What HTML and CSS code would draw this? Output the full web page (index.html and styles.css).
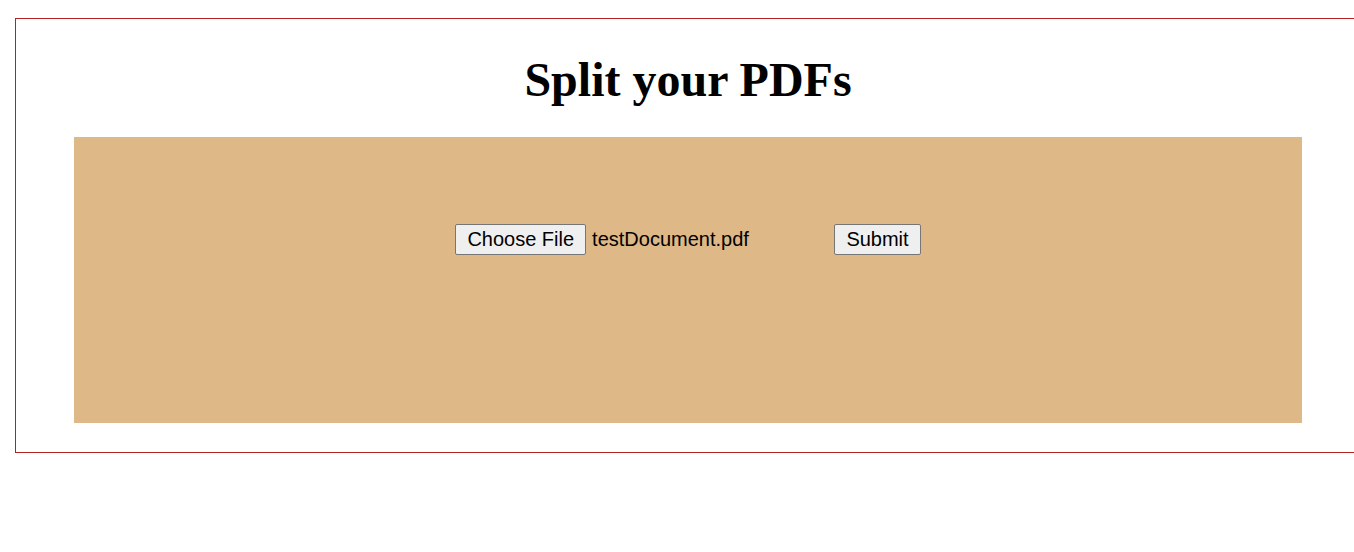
FILE: index.html
```html
<!DOCTYPE html>
<html>
<head>
<meta charset="utf-8">
<title>Split your PDFs</title>
<link rel="stylesheet" href="styles.css">
</head>
<body>
<div class="frame">
  <h1 class="title">Split your PDFs</h1>
  <div class="panel">
    <form class="upload">
      <div class="file-widget">
        <button type="button" class="btn">Choose File</button>
        <span class="file-name">testDocument.pdf</span>
      </div>
      <button type="button" class="btn">Submit</button>
    </form>
  </div>
</div>
</body>
</html>
```

FILE: styles.css
```css
html, body {
  margin: 0;
  padding: 0;
  overflow: hidden;
  background: #ffffff;
}

.frame {
  box-sizing: border-box;
  margin: 18px 0 0 15px;
  width: 1346px;
  border: 1px solid #b22222;
  padding: 0 58px 29px 58px;
}

.title {
  margin: 33px 0 30px 0;
  font-family: "Liberation Serif", "Times New Roman", serif;
  font-weight: bold;
  font-size: 48px;
  line-height: 55px;
  text-align: center;
  color: #000;
}

.panel {
  box-sizing: border-box;
  height: 286px;
  background: #deb887;
  padding-top: 87px;
}

.upload {
  display: flex;
  justify-content: center;
  align-items: center;
  gap: 4px;
  margin: 0;
}

.file-widget {
  display: flex;
  align-items: center;
  gap: 6px;
  width: 375px;
}

.btn {
  box-sizing: border-box;
  height: 31px;
  font-family: "Liberation Sans", Arial, sans-serif;
  font-size: 20px;
  line-height: 23px;
  color: #000;
  background: #efefef;
  border: 1px solid #767676;
  border-radius: 2px;
  padding: 3px 11px;
  margin: 0;
}

.file-name {
  font-family: "Liberation Sans", Arial, sans-serif;
  font-size: 20px;
  line-height: 23px;
  color: #000;
  white-space: nowrap;
}
```
